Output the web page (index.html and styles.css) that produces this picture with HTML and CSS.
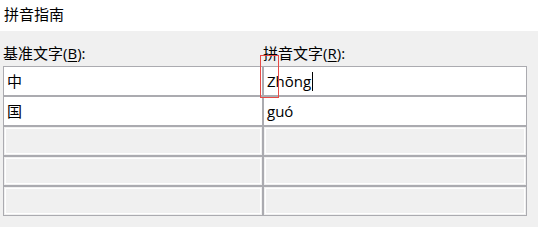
FILE: index.html
```html
<!DOCTYPE html>
<html lang="zh-CN">
<head>
  <meta charset="UTF-8">
  <title>拼音指南</title>
  <link rel="stylesheet" href="styles.css">
</head>
<body>
  <div class="title">拼音指南</div>
  <div class="panel">
    <div class="labels">
      <div class="label">基准文字(<u>B</u>):</div>
      <div class="label">拼音文字(<u>R</u>):</div>
    </div>
    <div class="grid">
      <div class="cell">中</div>
      <div class="cell">Zhōng<span class="caret"></span></div>
      <div class="cell">国</div>
      <div class="cell">guó</div>
      <div class="cell empty"></div>
      <div class="cell empty"></div>
      <div class="cell empty"></div>
      <div class="cell empty"></div>
      <div class="cell empty"></div>
      <div class="cell empty"></div>
    </div>
  </div>
  <div class="mark"></div>
</body>
</html>
```

FILE: styles.css
```css
* {
  margin: 0;
  padding: 0;
  box-sizing: border-box;
}

body {
  font-family: "Open Sans", "Noto Sans CJK SC", sans-serif;
  font-size: 15px;
  color: #000;
  background-color: #f0f0f0;
  width: 538px;
  height: 227px;
  position: relative;
  overflow: hidden;
}

.title {
  height: 31px;
  line-height: 28px;
  padding-left: 4px;
  background-color: #fff;
}

.panel {
  padding: 12px 11px 0 3px;
}

.labels {
  display: grid;
  grid-template-columns: 260px 260px;
  line-height: 20px;
  margin-bottom: 3px;
}

.label u {
  text-underline-offset: 2px;
}

.grid {
  display: grid;
  grid-template-columns: 258px 262px;
  grid-auto-rows: 28px;
  gap: 2px;
  padding: 1px;
  width: 524px;
  background-color: #ababb0;
}

.cell {
  background-color: #fff;
  padding-left: 3px;
  line-height: 28px;
  display: flex;
  align-items: center;
}

.cell.empty {
  background-color: #f0f0f0;
  box-shadow: inset 0 0 0 1px #f0f0f0, inset 0 0 0 2px #fff;
}

.caret {
  display: inline-block;
  width: 1px;
  height: 19px;
  margin-left: 1px;
  background-color: #000;
}

.mark {
  position: absolute;
  left: 260px;
  top: 55px;
  width: 19px;
  height: 43px;
  border: 1px solid #e84a45;
}
```
